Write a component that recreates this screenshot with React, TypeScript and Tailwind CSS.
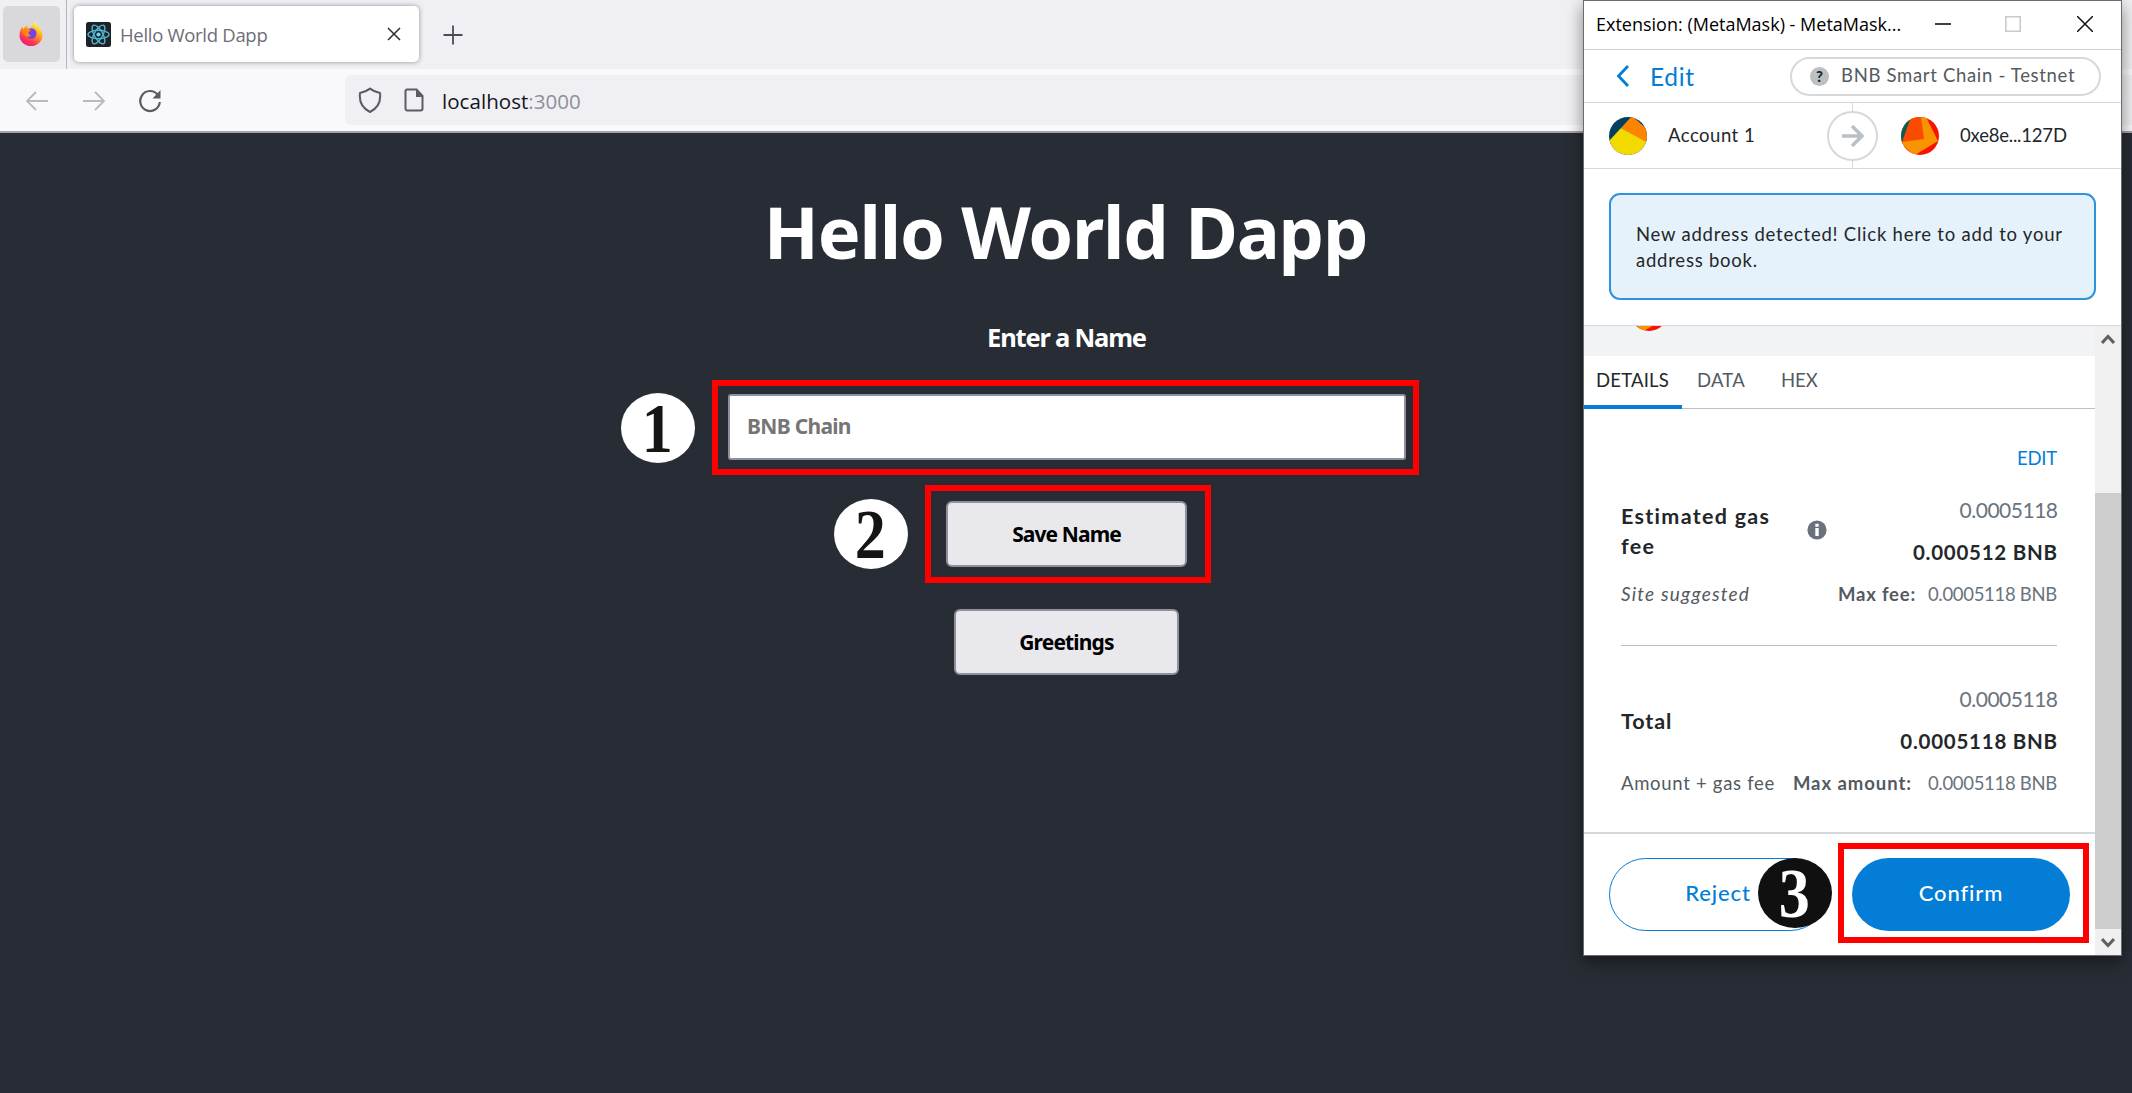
import type { ReactNode } from "react";

function Badge({ n, className }: { n: number; className: string }) {
  return (
    <div className={`absolute flex h-[70px] w-[74px] items-center justify-center rounded-[50%] font-['Liberation_Serif',serif] text-[69px] leading-none font-bold ${className}`}>
      <span className="mt-[2px] mr-[2px] scale-x-90">{n}</span>
    </div>
  );
}

function FirefoxIcon() {
  return (
    <svg viewBox="0 0 24 25" className="h-[25px] w-6">
      <defs>
        <linearGradient id="ff" x1="0.8" y1="0" x2="0.25" y2="1">
          <stop offset="0.1" stopColor="#fff44f" />
          <stop offset="0.45" stopColor="#ff9a1f" />
          <stop offset="0.75" stopColor="#ff3750" />
          <stop offset="1" stopColor="#e31587" />
        </linearGradient>
      </defs>
      <path d="M15.500 0.500c1.600 1.600 2 2.600 3 4.500 3 1.800 5 5 5 9.500a11.500 10.500 0 0 1-23 0c0-3.600 1-6.500 2.800-8.700.2 1.200.6 2 1 2.500C5.600 6 7 5 8.500 4.600c-.2 1 0 1.900.6 2.500C11.500 7.500 14.500 4 15.500.5z" fill="url(#ff)" />
      <ellipse cx="12.500" cy="12.500" rx="5" ry="5.200" fill="#7542e5" />
      <path d="M4 8c3-1 6-.5 8 1.700-1.500 0-2.500 1-2.500 2.300 0 1.700 1.500 2.500 3 2.300-3 3-9 .5-9-4z" fill="#ff8a16" />
    </svg>
  );
}

function ReactIcon() {
  return (
    <svg viewBox="0 0 25 25" className="size-[25px]">
      <rect width="25" height="25" rx="2.500" fill="#1e2125" />
      <g fill="none" stroke="#4fb3cf" strokeWidth="1.400">
        <ellipse cx="12.500" cy="12.500" rx="10.500" ry="4.200" />
        <ellipse cx="12.500" cy="12.500" rx="10.500" ry="4.200" transform="rotate(60 12.500 12.500)" />
        <ellipse cx="12.500" cy="12.500" rx="10.500" ry="4.200" transform="rotate(120 12.500 12.500)" />
      </g>
      <circle cx="12.500" cy="12.500" r="2.100" fill="#61dafb" />
    </svg>
  );
}

function Browser() {
  return (
    <header className="font-['Open_Sans',sans-serif]">
      <div className="flex h-[69px] items-start bg-[#f0f0f4]">
        <div className="mt-[6px] ml-[3px] flex h-[56px] w-[57px] items-center justify-center rounded-[5px] bg-[#d8d8dd] pr-px pb-px">
          <FirefoxIcon />
        </div>
        <div className="ml-[6px] h-[69px] w-px bg-[#b4b4ba]" />
        <div className="mt-[6px] ml-[7px] flex h-[56px] w-[345px] items-center rounded-[5px] bg-white pl-3 shadow-[0_0_5px_rgba(0,0,0,0.4)]">
          <ReactIcon />
          <span className="mt-[2px] ml-[9px] text-[18.500px] tracking-[-0.300px] text-[#6e6e78]">Hello World Dapp</span>
          <svg viewBox="0 0 14 14" className="mr-[18px] ml-auto size-[14px]" fill="none" stroke="#2b2a33" strokeWidth="1.500">
            <path d="M1 1l12 12M13 1L1 13" />
          </svg>
        </div>
        <svg viewBox="0 0 20 20" className="mt-[25px] ml-[24px] size-5" fill="none" stroke="#4c4b54" strokeWidth="1.800">
          <path d="M10 0.500v19M0.500 10h19" />
        </svg>
      </div>
      <div className="flex h-[64px] items-center border-b-2 border-[#a5a5a8] bg-[#f9f9fb]">
        <svg viewBox="0 0 24 20" className="mt-px ml-[25px] h-5 w-6" fill="none" stroke="#b9b9be" strokeWidth="1.800">
          <path d="M23 10H2M11 1L2 10l9 9" />
        </svg>
        <svg viewBox="0 0 24 20" className="mt-px ml-[33px] h-5 w-6" fill="none" stroke="#b9b9be" strokeWidth="1.800">
          <path d="M1 10h21M13 1l9 9-9 9" />
        </svg>
        <svg viewBox="0 0 24 24" className="mt-px ml-[32px] size-6" fill="none" stroke="#5b5b66" strokeWidth="2.200">
          <path d="M19.500 5.500A9.800 10 0 1 0 21.800 13" />
          <path d="M22.500 1v8.500h-8z" fill="#5b5b66" stroke="none" />
        </svg>
        <div className="ml-[183px] flex h-[50px] flex-1 items-center rounded-l-[5px] bg-[#f0f0f4]">
          <svg viewBox="0 0 24 26" className="ml-[13px] h-[26px] w-6" fill="none" stroke="#5b5b66" strokeWidth="2">
            <path d="M12 1.500C9 4 6 5 2 6 1 14 4 21 12 25 20 21 23 14 22 6 18 5 15 4 12 1.500z" strokeLinejoin="round" />
          </svg>
          <svg viewBox="0 0 20 24" className="ml-[22px] h-6 w-5" fill="none" stroke="#5b5b66" strokeWidth="2">
            <path d="M3 1.500h9.500L18.500 8v12.500a2 2 0 0 1-2 2H3a2 2 0 0 1-1.500-2V3A1.500 1.500 0 0 1 3 1.500z" />
            <path d="M12 1.500V9h7z" fill="#5b5b66" stroke="none" />
          </svg>
          <span className="mt-[3px] ml-[18px] text-[20.500px] tracking-[0.050px] text-[#15141a]">localhost<span className="text-[#8f8f98]">:3000</span></span>
        </div>
      </div>
    </header>
  );
}

function Avatar({ second }: { second?: boolean }) {
  return (
    <svg viewBox="0 0 38 38" className="size-[38px] rounded-full">
      {second ? (
        <>
          <rect width="38" height="38" fill="#fa1200" />
          <path d="M-2 24L12 38h2l23-14L25 0H0z" fill="#f79400" />
          <path d="M0 0h12L2 25H0z" fill="#075e56" />
          <path d="M10 0h10l3 22-22 3z" fill="#fb4b03" />
        </>
      ) : (
        <>
          <rect width="38" height="38" fill="#033f5e" />
          <path d="M12 11L23-1l16 14v14z" fill="#fb8500" />
          <path d="M0 24L12 11l27 15v12H0z" fill="#f2d900" />
        </>
      )}
    </svg>
  );
}

function Row({ className, children }: { className: string; children: ReactNode }) {
  return <div className={`flex items-center justify-between whitespace-nowrap ${className}`}>{children}</div>;
}

function Amounts({ fee, total }: { fee: string; total: string }) {
  return (
    <div className="flex-1 text-right leading-[42px]">
      <div className="-mr-[0.500px] text-[21px] tracking-[-0.500px]">{fee}</div>
      <div className="-mr-[0.800px] text-[20.500px] font-bold tracking-[0.750px] text-[#24272a]">{total}</div>
    </div>
  );
}

function Wallet() {
  return (
    <aside className="absolute top-0 left-[1583px] flex h-[956px] w-[539px] flex-col border border-[#6a6a70] bg-white font-[Lato,sans-serif] text-[#24272a] shadow-[0_6px_16px_rgba(0,0,0,0.45)]">
      <div className="flex h-[49px] shrink-0 items-center border-b border-[#cfcfcf] pl-[12px] font-['Open_Sans',sans-serif] text-[18px] text-black">
        <span className="-mt-px w-[307px] whitespace-nowrap">Extension: (MetaMask) - MetaMask...</span>
        <svg viewBox="0 0 16 16" className="-mt-[2px] ml-[32px] size-4" stroke="#111" strokeWidth="1.600"><path d="M0 8h16" /></svg>
        <svg viewBox="0 0 16 16" className="-mt-[2px] ml-[54px] size-4" fill="none" stroke="#c9c9c9" strokeWidth="1.500"><path d="M.8.8h14.400v14.400H.8z" /></svg>
        <svg viewBox="0 0 16 16" className="-mt-[2px] ml-[56px] size-4" fill="none" stroke="#111" strokeWidth="1.500"><path d="M0 0l16 16M16 0L0 16" /></svg>
      </div>
      <div className="flex h-[53px] shrink-0 items-center border-b border-[#d6d9dc] pr-5 pl-8">
        <svg viewBox="0 0 14 22" className="h-[22px] w-[14px]" fill="none" stroke="#037dd6" strokeWidth="2.800"><path d="M12 1L2.500 11 12 21" /></svg>
        <span className="mt-[2px] ml-[20px] text-[24.500px] tracking-[0.700px] text-[#037dd6]">Edit</span>
        <div className="ml-auto flex h-[39px] w-[311px] items-center rounded-full border-2 border-[#d6d9dc] pl-[18px]">
          <span className="flex size-[19px] items-center justify-center rounded-full bg-[#bbc0c5] text-[15px] font-black">?</span>
          <span className="ml-3 text-[18.500px] tracking-[0.680px] whitespace-nowrap text-[#535a61]">BNB Smart Chain - Testnet</span>
        </div>
      </div>
      <div className="flex h-[66px] shrink-0 items-center border-b border-[#d6d9dc] pl-[25px] text-[18.500px]">
        <Avatar />
        <span className="ml-[21px] w-[159px] tracking-[0.500px]">Account 1</span>
        <div className="flex w-[51px] flex-col items-center">
          <div className="h-2 w-px bg-[#d6d9dc]" />
          <div className="flex h-[50px] w-[51px] items-center justify-center rounded-full border-2 border-[#d6d9dc]">
            <svg viewBox="0 0 22 22" className="size-[22px]" fill="none" stroke="#bbc0c5" strokeWidth="3.500"><path d="M0 11h20M10 1l10 10-10 10" /></svg>
          </div>
          <div className="h-2 w-px bg-[#d6d9dc]" />
        </div>
        <div className="ml-[23px] h-[38px]"><Avatar second /></div>
        <span className="ml-[21px] tracking-[-0.200px]">0xe8e...127D</span>
      </div>
      <div className="h-[157px] shrink-0 border-b border-[#d6d9dc] pt-[24px] pl-[25px]">
        <div className="h-[107px] w-[487px] rounded-[11px] border-2 border-[#2e92dc] bg-[#e6f2fb] pt-[25.500px] pl-[25px] text-[18.500px] leading-[26.500px] tracking-[0.770px] whitespace-nowrap">
          New address detected! Click here to add to your<br />address book.
        </div>
      </div>
      <div className="flex min-h-0 flex-1">
        <div className="flex w-[511px] flex-col">
          <div className="h-[30px] shrink-0 overflow-hidden bg-[#f2f3f4] pl-[46px]">
            <div className="-mt-[33px]"><Avatar second /></div>
          </div>
          <div className="flex h-[53px] shrink-0 border-b border-[#bbc0c5] text-[18.500px] leading-[49px] text-[#535a61]">
            <span className="-mb-px w-[98px] border-b-4 border-[#037dd6] pl-[12px] tracking-[0.200px] text-[#24272a]">DETAILS</span>
            <span className="ml-[15px] w-[84px] tracking-[0.200px]">DATA</span>
            <span>HEX</span>
          </div>
          <div className="mr-[38px] ml-[37px] flex h-[237px] shrink-0 flex-col border-b-[1.500px] border-[#bbc0c5] text-[#6a737d]">
            <div className="mt-[35px] text-right text-[18.500px] leading-7 tracking-[-0.200px] text-[#037dd6]">EDIT</div>
            <div className="mt-[17px] flex h-[89px]">
              <div className="w-[186px] pt-[13px] text-[21.500px] leading-[29.500px] font-bold tracking-[1.300px] text-[#24272a]">Estimated gas<br />fee</div>
              <svg viewBox="0 0 20 20" className="mt-[31px] size-5"><circle cx="10" cy="10" r="9.600" fill="#6a737d" /><path d="M8.300 3.800h3.400v3H8.300zM8.300 8h3.400v8H8.300z" fill="#fff" /></svg>
              <Amounts fee="0.0005118" total="0.000512 BNB" />
            </div>
            <Row className="h-[34px] text-[18.500px] text-[#535a61]">
              <i className="-mt-px text-[19px] tracking-[1.200px]">Site suggested</i>
              <span className="flex"><b className="w-[90px] tracking-[0.800px]">Max fee:</b><span className="tracking-[-0.300px] text-[#6a737d]">0.0005118 BNB</span></span>
            </Row>
          </div>
          <div className="mr-[38px] ml-[37px] flex h-[186px] shrink-0 flex-col text-[#6a737d]">
            <Row className="mt-[32px] h-[89px]">
              <b className="-mt-[3px] text-[21.500px] tracking-[0.900px] text-[#24272a]">Total</b>
              <div className="flex h-[89px] flex-1 items-start"><Amounts fee="0.0005118" total="0.0005118 BNB" /></div>
            </Row>
            <Row className="h-[34px] text-[18.500px] text-[#535a61]">
              <span className="tracking-[0.700px]">Amount + gas fee</span>
              <span className="flex"><b className="w-[135px] tracking-[0.950px]">Max amount:</b><span className="tracking-[-0.300px] text-[#6a737d]">0.0005118 BNB</span></span>
            </Row>
          </div>
          <div className="flex flex-1 items-start border-t-2 border-[#d6d9dc] pt-[24px] pl-[25px] text-[22px] font-medium">
            <button className="h-[73px] w-[218px] rounded-full border-[1.500px] border-[#037dd6] pb-[5px] tracking-[0.900px] text-[#037dd6]">Reject</button>
            <button className="ml-[25px] h-[73px] w-[218px] rounded-full bg-[#037dd6] pb-[5px] tracking-[0.850px] text-white">Confirm</button>
          </div>
        </div>
        <div className="flex flex-1 flex-col items-center bg-[#f0f0f0]">
          <svg viewBox="0 0 14 10" className="mt-[8px] h-[10px] w-[14px]" fill="none" stroke="#606060" strokeWidth="3"><path d="M1 9l6-6.500L13 9" /></svg>
          <div className="mt-[149px] h-[436px] w-full bg-[#cdcdcd]" />
          <svg viewBox="0 0 14 10" className="mt-[9px] h-[10px] w-[14px]" fill="none" stroke="#606060" strokeWidth="3"><path d="M1 1l6 6.500L13 1" /></svg>
        </div>
      </div>
    </aside>
  );
}

export default function App() {
  return (
    <div className="relative h-[1093px] w-[2132px] overflow-hidden bg-[#282c34]">
      <Browser />
      <main className="flex flex-col items-center pt-[55px] font-['Noto_Sans',sans-serif] font-bold text-white">
        <h1 className="mr-px text-[72px] leading-[86px] tracking-[-1.200px] whitespace-nowrap">Hello World Dapp</h1>
        <h2 className="mt-[44px] ml-px text-[25.500px] leading-[38px] tracking-[-1.200px]">Enter a Name</h2>
        <div className="mt-[24px] mr-px flex h-[95px] w-[707px] items-center justify-center border-6 border-[#fe0000]">
          <div className="ml-[3px] flex h-[66px] w-[678px] -translate-y-px items-center rounded-[3px] border-2 border-[#8f8f9d] bg-white pl-[17px] text-[21px] tracking-[-0.700px] text-[#757575]">BNB Chain</div>
        </div>
        <div className="mt-[10px] ml-[4px] flex h-[98px] w-[286px] justify-center border-6 border-[#fe0000] pt-[10px]">
          <div className="mr-[3px] flex h-[66px] w-[241px] items-center justify-center rounded-[6px] border-2 border-[#8f8f9d] bg-[#e9e9ed] pt-[2px] text-[21px] tracking-[-0.900px] text-black">Save Name</div>
        </div>
        <div className="mt-[26px] ml-px flex h-[66px] w-[225px] items-center justify-center rounded-[6px] border-2 border-[#8f8f9d] bg-[#e9e9ed] pt-px text-[21px] tracking-[-0.850px] text-black">Greetings</div>
      </main>
      <Wallet />
      <Badge n={1} className="top-[393px] left-[621px] bg-white text-[#151515]" />
      <Badge n={2} className="top-[499px] left-[834px] bg-white text-[#151515]" />
      <Badge n={3} className="top-[858px] left-[1758px] bg-[#101010] text-white" />
      <div className="absolute top-[843px] left-[1838px] h-[100px] w-[251px] border-6 border-[#fe0000]" />
    </div>
  );
}
